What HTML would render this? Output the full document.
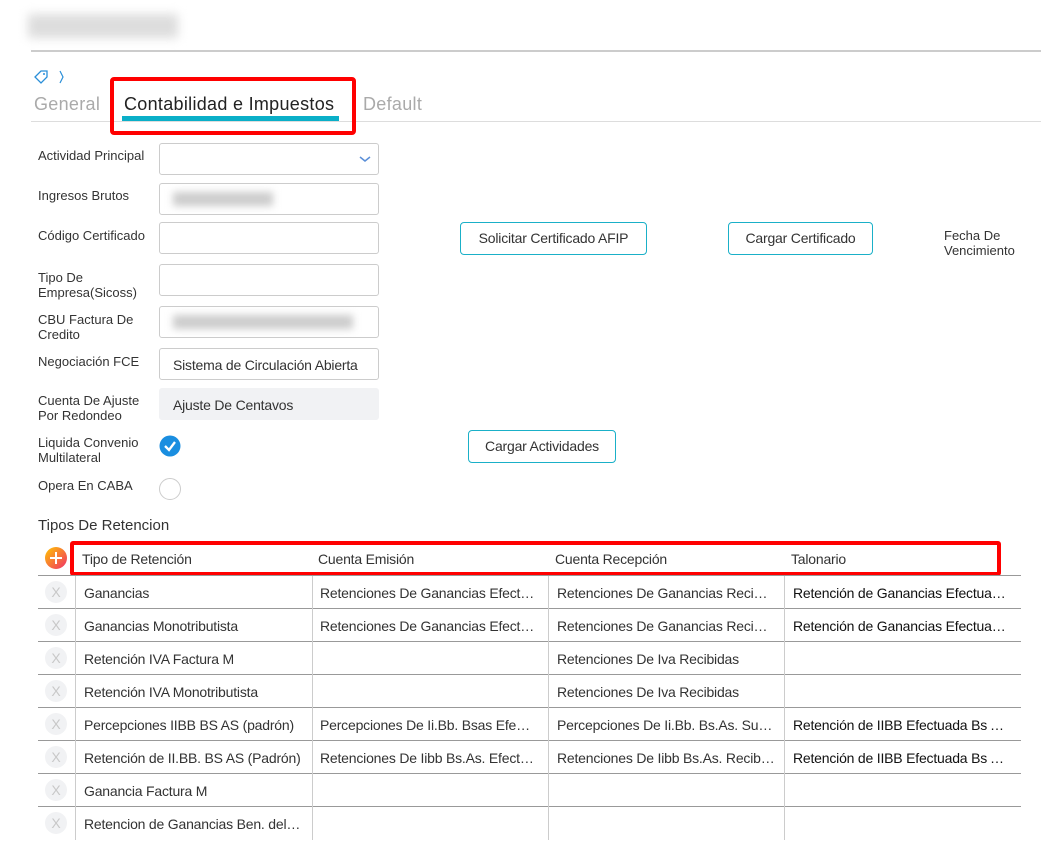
<!DOCTYPE html>
<html><head><meta charset="utf-8"><style>
*{box-sizing:border-box;margin:0;padding:0}
body{width:1041px;height:852px;background:#fff;font-family:"Liberation Sans",sans-serif;color:#333;position:relative;overflow:hidden}
.a{position:absolute}
.lbl{position:absolute;left:38px;font-size:13px;line-height:15px;color:#333}
.inp{position:absolute;left:159px;width:220px;height:32px;border:1px solid #ccc;border-radius:3px;font-size:14px;padding:8px 13px;color:#333;white-space:nowrap;overflow:hidden;letter-spacing:-0.2px}
.btn{position:absolute;height:33px;border:1px solid #1ab0c8;border-radius:4px;font-size:14px;line-height:31px;text-align:center;color:#333;letter-spacing:-0.2px}
.hl{position:absolute;left:38px;width:983px;height:1px;background:#999}
.vl{position:absolute;width:1px;background:#ccc}
.c{position:absolute;font-size:14px;color:#333;white-space:nowrap;overflow:hidden;text-overflow:ellipsis;letter-spacing:-0.2px}
.x{position:absolute;left:45px;width:22px;height:22px;border-radius:50%;background:#f1f2f4;color:#c8c8c8;font-size:14px;text-align:center;line-height:22px}
.tab{position:absolute;top:94px;font-size:18px;letter-spacing:0.3px}
</style></head><body>
<div class="a" style="left:28px;top:14px;width:150px;height:24px;background:#ddd;filter:blur(5px)"></div>
<div class="a" style="left:31px;top:50px;width:1010px;height:2px;background:#ccc"></div>
<svg class="a" style="left:33px;top:69px" width="36" height="16" viewBox="0 0 36 16"><path d="M2 8 L8 2 L14 2 L14 8 L8 14 Z" fill="none" stroke="#2a8fd8" stroke-width="1.3"/><circle cx="11" cy="5" r="1" fill="#2a8fd8"/><path d="M27 2 L30 8 L27 14" fill="none" stroke="#2a8fd8" stroke-width="1.2"/></svg>
<div class="tab" style="left:34px;color:#aaa">General</div>
<div class="tab" style="left:124px;color:#222">Contabilidad e Impuestos</div>
<div class="tab" style="left:363px;color:#aaa">Default</div>
<div class="a" style="left:31px;top:121px;width:1010px;height:1px;background:#ddd"></div>
<div class="a" style="left:122px;top:116px;width:217px;height:5px;background:#0aafc8"></div>
<div class="a" style="left:110px;top:77px;width:246px;height:58px;border:4px solid #f00;border-radius:4px"></div>

<div class="lbl" style="top:148px">Actividad Principal</div>
<div class="inp" style="top:143px"></div>
<svg class="a" style="left:359px;top:155px" width="12" height="8"><path d="M1 2 L6 6 L11 2" fill="none" stroke="#5b8fd8" stroke-width="1.5"/></svg>
<div class="lbl" style="top:188px">Ingresos Brutos</div>
<div class="inp" style="top:183px"><div style="width:100px;height:14px;background:#ccc;filter:blur(4px)"></div></div>
<div class="lbl" style="top:228px">Código Certificado</div>
<div class="inp" style="top:222px"></div>
<div class="lbl" style="top:270px">Tipo De<br>Empresa(Sicoss)</div>
<div class="inp" style="top:264px"></div>
<div class="lbl" style="top:312px">CBU Factura De<br>Credito</div>
<div class="inp" style="top:306px"><div style="width:180px;height:14px;background:#ccc;filter:blur(4px)"></div></div>
<div class="lbl" style="top:354px">Negociación FCE</div>
<div class="inp" style="top:348px">Sistema de Circulación Abierta</div>
<div class="lbl" style="top:393px">Cuenta De Ajuste<br>Por Redondeo</div>
<div class="inp" style="top:388px;background:#f1f2f4;border-color:#f1f2f4">Ajuste De Centavos</div>
<div class="lbl" style="top:435px">Liquida Convenio<br>Multilateral</div>
<svg class="a" style="left:159px;top:435px" width="22" height="22"><circle cx="11" cy="11" r="10.5" fill="#1a8ee0"/><path d="M6 11 L10 15 L16 7" fill="none" stroke="#fff" stroke-width="2.3"/></svg>
<div class="lbl" style="top:478px">Opera En CABA</div>
<div class="a" style="left:159px;top:478px;width:22px;height:22px;border:1px solid #ccc;border-radius:50%"></div>

<div class="btn" style="left:460px;top:222px;width:187px">Solicitar Certificado AFIP</div>
<div class="btn" style="left:728px;top:222px;width:145px">Cargar Certificado</div>
<div class="a" style="left:944px;top:228px;font-size:13px;line-height:15px">Fecha De<br>Vencimiento</div>
<div class="btn" style="left:468px;top:430px;width:148px">Cargar Actividades</div>

<div class="a" style="left:38px;top:517px;font-size:15px;color:#333">Tipos De Retencion</div>
<svg class="a" style="left:45px;top:547px" width="22" height="22"><defs><linearGradient id="g" x1="0" y1="0" x2="1" y2="1"><stop offset="0" stop-color="#ffc400"/><stop offset="1" stop-color="#f0306a"/></linearGradient></defs><circle cx="11" cy="11" r="11" fill="url(#g)"/><path d="M11 5V17M5 11H17" stroke="#fff" stroke-width="2"/></svg>
<div class="c" style="left:82px;top:551px">Tipo de Retención</div>
<div class="c" style="left:318px;top:551px">Cuenta Emisión</div>
<div class="c" style="left:555px;top:551px">Cuenta Recepción</div>
<div class="c" style="left:791px;top:551px">Talonario</div>
<div class="a" style="left:70px;top:541px;width:931px;height:35px;border:4px solid #f00;border-radius:3px"></div>

<div class="hl" style="top:575px"></div><div class="hl" style="top:608px"></div><div class="hl" style="top:641px"></div><div class="hl" style="top:674px"></div><div class="hl" style="top:707px"></div><div class="hl" style="top:740px"></div><div class="hl" style="top:773px"></div><div class="hl" style="top:806px"></div>
<div class="vl" style="left:75px;top:576px;height:264px"></div>
<div class="vl" style="left:312px;top:576px;height:264px"></div>
<div class="vl" style="left:548px;top:576px;height:264px"></div>
<div class="vl" style="left:784px;top:576px;height:264px"></div>

<div class="x" style="top:581px">X</div><div class="x" style="top:614px">X</div><div class="x" style="top:647px">X</div><div class="x" style="top:680px">X</div><div class="x" style="top:713px">X</div><div class="x" style="top:746px">X</div><div class="x" style="top:779px">X</div><div class="x" style="top:812px">X</div>

<div class="c" style="left:84px;top:585px;width:218px">Ganancias</div>
<div class="c" style="left:320px;top:585px;width:216px">Retenciones De Ganancias Efectuadas</div>
<div class="c" style="left:557px;top:585px;width:218px">Retenciones De Ganancias Recibidas</div>
<div class="c" style="left:793px;top:585px;width:216px;color:#111">Retención de Ganancias Efectuadas</div>

<div class="c" style="left:84px;top:618px;width:218px">Ganancias Monotributista</div>
<div class="c" style="left:320px;top:618px;width:216px">Retenciones De Ganancias Efectuadas</div>
<div class="c" style="left:557px;top:618px;width:218px">Retenciones De Ganancias Recibidas</div>
<div class="c" style="left:793px;top:618px;width:216px;color:#111">Retención de Ganancias Efectuadas</div>

<div class="c" style="left:84px;top:651px;width:218px">Retención IVA Factura M</div>
<div class="c" style="left:557px;top:651px;width:218px">Retenciones De Iva Recibidas</div>

<div class="c" style="left:84px;top:684px;width:218px">Retención IVA Monotributista</div>
<div class="c" style="left:557px;top:684px;width:218px">Retenciones De Iva Recibidas</div>

<div class="c" style="left:84px;top:717px;width:218px">Percepciones IIBB BS AS (padrón)</div>
<div class="c" style="left:320px;top:717px;width:216px">Percepciones De Ii.Bb. Bsas Efectuadas</div>
<div class="c" style="left:557px;top:717px;width:218px">Percepciones De Ii.Bb. Bs.As. Sufridas</div>
<div class="c" style="left:793px;top:717px;width:214px;color:#111">Retención de IIBB Efectuada Bs As.</div>

<div class="c" style="left:84px;top:750px;width:218px">Retención de II.BB. BS AS (Padrón)</div>
<div class="c" style="left:320px;top:750px;width:216px">Retenciones De Iibb Bs.As. Efectuadas</div>
<div class="c" style="left:557px;top:750px;width:218px">Retenciones De Iibb Bs.As. Recibidas</div>
<div class="c" style="left:793px;top:750px;width:214px;color:#111">Retención de IIBB Efectuada Bs As.</div>

<div class="c" style="left:84px;top:783px;width:218px">Ganancia Factura M</div>
<div class="c" style="left:84px;top:816px;width:218px">Retencion de Ganancias Ben. del exterior</div>
</body></html>
